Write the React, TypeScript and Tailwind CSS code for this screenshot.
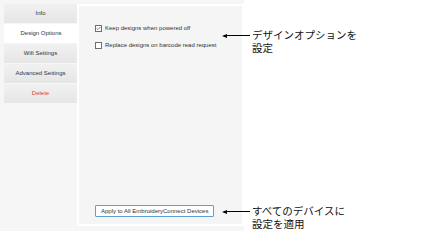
import { Check } from 'lucide-react';

const tabs = [
  { label: 'Info' },
  { label: 'Design Options', active: true },
  { label: 'Wifi Settings' },
  { label: 'Advanced Settings' },
  { label: 'Delete', danger: true },
];

const Checkbox = ({ checked, label }: { checked?: boolean; label: string }) => (
  <label className="flex items-center gap-[3px] h-[8px]">
    <span className="w-[7px] h-[7px] border border-[#6f6f6f] bg-white flex items-center justify-center">
      {checked && <Check size={7} strokeWidth={3} className="text-[#333]" />}
    </span>
    <span className="text-[6px] leading-none text-[#333]">{label}</span>
  </label>
);

const Callout = ({ top, lines }: { top: number; lines: string[] }) => (
  <div className="absolute left-[222px] flex items-start" style={{ top }}>
    <div className="flex items-center h-[13px] mt-px">
      <span className="w-0 h-0 border-y-[2px] border-y-transparent border-r-[5px] border-r-black" />
      <span className="w-[23px] h-px bg-black" />
    </div>
    <div className="ml-[2px] text-[10.5px] leading-[13px] text-[#111]" style={{ fontFamily: '"Noto Sans CJK JP", sans-serif' }}>
      {lines.map((l) => (
        <div key={l}>{l}</div>
      ))}
    </div>
  </div>
);

export default function App() {
  return (
    <div className="relative w-[422px] h-[245px] bg-white" style={{ fontFamily: '"Liberation Sans", Arial, sans-serif' }}>
      <div className="w-[244px] h-[231px] bg-[#f6f6f6] flex pt-[4px] pl-[4px] pb-[5px]">
        <div className="w-[73px] flex flex-col gap-px">
          {tabs.map((t) => (
            <div
              key={t.label}
              className={
                'h-[19px] flex items-center justify-center text-[6px] ' +
                (t.active
                  ? 'bg-white mr-[-1px] text-[#333]'
                  : 'bg-gradient-to-b from-[#f1f1f1] to-[#e6e6e6] ' + (t.danger ? 'text-[#e8363c]' : 'text-[#333]'))
              }
            >
              {t.label}
            </div>
          ))}
        </div>
        <div className="flex-1 border-2 border-white bg-[#f5f5f5] flex flex-col pl-[16px] pt-[18px] pb-[4px]">
          <div className="flex flex-col gap-[9px]">
            <Checkbox checked label="Keep designs when powered off" />
            <Checkbox label="Replace designs on barcode read request" />
          </div>
          <div className="mt-auto">
            <button className="h-[12px] px-[5px] border border-[#5d9fd1] rounded-[1px] bg-white text-[6px] leading-none text-[#333]">
              Apply to All EmbroideryConnect Devices
            </button>
          </div>
        </div>
      </div>
      <Callout top={28} lines={['デザインオプションを', '設定']} />
      <Callout top={204} lines={['すべてのデバイスに', '設定を適用']} />
    </div>
  );
}
